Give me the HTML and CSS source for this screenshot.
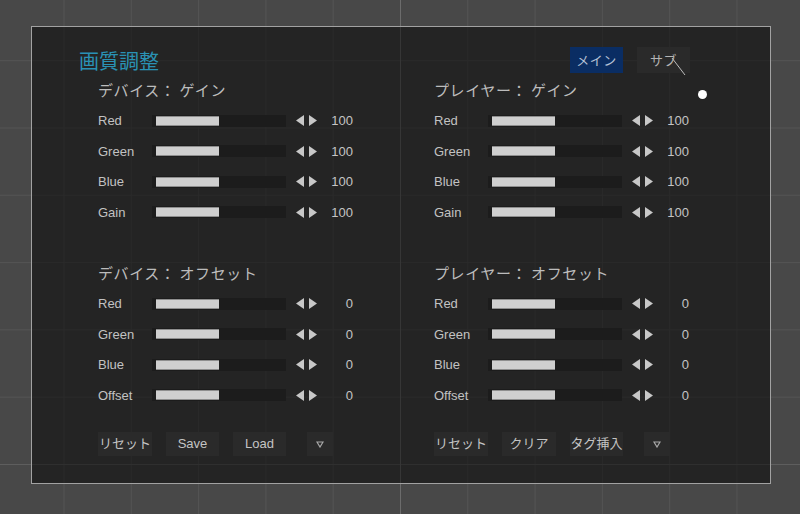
FILE: index.html
```html
<!DOCTYPE html>
<html lang="ja">
<head>
<meta charset="utf-8">
<title>画質調整</title>
<link rel="stylesheet" href="styles.css">
</head>
<body>
<div class="panel">
  <div class="topbar">
    <h1 class="title">画質調整</h1>
    <div class="tabs">
      <button class="tab tab-active">メイン</button>
      <button class="tab">サブ</button>
    </div>
  </div>
  <div class="columns">
    <section class="col">
      <div class="group">
        <h2 class="group-title">デバイス： ゲイン</h2>
        <div class="row"><span class="label">Red</span><span class="track"><span class="fill"></span></span><svg class="arrows" width="21" height="11" viewBox="0 0 21 11"><polygon points="8,0 0,5.5 8,11"/><polygon points="13,0 21,5.5 13,11"/></svg><span class="value">100</span></div>
        <div class="row"><span class="label">Green</span><span class="track"><span class="fill"></span></span><svg class="arrows" width="21" height="11" viewBox="0 0 21 11"><polygon points="8,0 0,5.5 8,11"/><polygon points="13,0 21,5.5 13,11"/></svg><span class="value">100</span></div>
        <div class="row"><span class="label">Blue</span><span class="track"><span class="fill"></span></span><svg class="arrows" width="21" height="11" viewBox="0 0 21 11"><polygon points="8,0 0,5.5 8,11"/><polygon points="13,0 21,5.5 13,11"/></svg><span class="value">100</span></div>
        <div class="row"><span class="label">Gain</span><span class="track"><span class="fill"></span></span><svg class="arrows" width="21" height="11" viewBox="0 0 21 11"><polygon points="8,0 0,5.5 8,11"/><polygon points="13,0 21,5.5 13,11"/></svg><span class="value">100</span></div>
      </div>
      <div class="group group-second">
        <h2 class="group-title">デバイス： オフセット</h2>
        <div class="row"><span class="label">Red</span><span class="track"><span class="fill"></span></span><svg class="arrows" width="21" height="11" viewBox="0 0 21 11"><polygon points="8,0 0,5.5 8,11"/><polygon points="13,0 21,5.5 13,11"/></svg><span class="value">0</span></div>
        <div class="row"><span class="label">Green</span><span class="track"><span class="fill"></span></span><svg class="arrows" width="21" height="11" viewBox="0 0 21 11"><polygon points="8,0 0,5.5 8,11"/><polygon points="13,0 21,5.5 13,11"/></svg><span class="value">0</span></div>
        <div class="row"><span class="label">Blue</span><span class="track"><span class="fill"></span></span><svg class="arrows" width="21" height="11" viewBox="0 0 21 11"><polygon points="8,0 0,5.5 8,11"/><polygon points="13,0 21,5.5 13,11"/></svg><span class="value">0</span></div>
        <div class="row"><span class="label">Offset</span><span class="track"><span class="fill"></span></span><svg class="arrows" width="21" height="11" viewBox="0 0 21 11"><polygon points="8,0 0,5.5 8,11"/><polygon points="13,0 21,5.5 13,11"/></svg><span class="value">0</span></div>
      </div>
      <div class="actions">
        <button class="btn btn-wide">リセット</button>
        <button class="btn">Save</button>
        <button class="btn">Load</button>
        <button class="btn btn-drop"><svg width="8" height="7" viewBox="0 0 8 7"><polygon points="1,1 7,1 4,6"/></svg></button>
      </div>
    </section>
    <section class="col">
      <div class="group">
        <h2 class="group-title">プレイヤー： ゲイン</h2>
        <div class="row"><span class="label">Red</span><span class="track"><span class="fill"></span></span><svg class="arrows" width="21" height="11" viewBox="0 0 21 11"><polygon points="8,0 0,5.5 8,11"/><polygon points="13,0 21,5.5 13,11"/></svg><span class="value">100</span></div>
        <div class="row"><span class="label">Green</span><span class="track"><span class="fill"></span></span><svg class="arrows" width="21" height="11" viewBox="0 0 21 11"><polygon points="8,0 0,5.5 8,11"/><polygon points="13,0 21,5.5 13,11"/></svg><span class="value">100</span></div>
        <div class="row"><span class="label">Blue</span><span class="track"><span class="fill"></span></span><svg class="arrows" width="21" height="11" viewBox="0 0 21 11"><polygon points="8,0 0,5.5 8,11"/><polygon points="13,0 21,5.5 13,11"/></svg><span class="value">100</span></div>
        <div class="row"><span class="label">Gain</span><span class="track"><span class="fill"></span></span><svg class="arrows" width="21" height="11" viewBox="0 0 21 11"><polygon points="8,0 0,5.5 8,11"/><polygon points="13,0 21,5.5 13,11"/></svg><span class="value">100</span></div>
      </div>
      <div class="group group-second">
        <h2 class="group-title">プレイヤー： オフセット</h2>
        <div class="row"><span class="label">Red</span><span class="track"><span class="fill"></span></span><svg class="arrows" width="21" height="11" viewBox="0 0 21 11"><polygon points="8,0 0,5.5 8,11"/><polygon points="13,0 21,5.5 13,11"/></svg><span class="value">0</span></div>
        <div class="row"><span class="label">Green</span><span class="track"><span class="fill"></span></span><svg class="arrows" width="21" height="11" viewBox="0 0 21 11"><polygon points="8,0 0,5.5 8,11"/><polygon points="13,0 21,5.5 13,11"/></svg><span class="value">0</span></div>
        <div class="row"><span class="label">Blue</span><span class="track"><span class="fill"></span></span><svg class="arrows" width="21" height="11" viewBox="0 0 21 11"><polygon points="8,0 0,5.5 8,11"/><polygon points="13,0 21,5.5 13,11"/></svg><span class="value">0</span></div>
        <div class="row"><span class="label">Offset</span><span class="track"><span class="fill"></span></span><svg class="arrows" width="21" height="11" viewBox="0 0 21 11"><polygon points="8,0 0,5.5 8,11"/><polygon points="13,0 21,5.5 13,11"/></svg><span class="value">0</span></div>
      </div>
      <div class="actions">
        <button class="btn btn-wide">リセット</button>
        <button class="btn btn-wide">クリア</button>
        <button class="btn">タグ挿入</button>
        <button class="btn btn-drop"><svg width="8" height="7" viewBox="0 0 8 7"><polygon points="1,1 7,1 4,6"/></svg></button>
      </div>
    </section>
  </div>
  <svg class="cursor-line" width="16" height="20" viewBox="0 0 16 20"><line x1="1" y1="1" x2="14" y2="18"/></svg>
  <span class="cursor-dot"></span>
</div>
</body>
</html>
```

FILE: styles.css
```css
html {
  height: 100%;
  background-color: #484848;
  background-image:
    linear-gradient(to right, transparent 400px, #6c6c6c 400px, #6c6c6c 401px, transparent 401px),
    linear-gradient(to bottom, transparent 464px, #5e5e5e 464px, #5e5e5e 465px, transparent 465px),
    linear-gradient(to right, #545454 1px, transparent 1px),
    linear-gradient(to bottom, #545454 1px, transparent 1px);
  background-size: 800px 514px, 800px 514px, 67.3px 67.3px, 67.3px 67.3px;
  background-position: 0 0, 0 0, 63.5px 0, 0 60.2px;
  background-repeat: no-repeat, no-repeat, repeat, repeat;
}

body {
  margin: 0;
  font-family: "Liberation Sans", "Noto Sans CJK JP", sans-serif;
  color: #c4c4c4;
}

.panel {
  position: relative;
  box-sizing: border-box;
  margin: 26px 0 0 31px;
  width: 740px;
  height: 458px;
  border: 1px solid #a2a2a2;
  background: rgba(0, 0, 0, 0.5);
  padding-top: 20px;
}

.topbar {
  display: flex;
  justify-content: space-between;
  align-items: center;
  height: 26px;
  padding: 0 80px 0 47px;
}

.title {
  margin: 0;
  padding-top: 2px;
  font-family: "Noto Sans CJK JP", sans-serif;
  font-weight: normal;
  font-size: 20px;
  line-height: 24px;
  color: #2a92b4;
}

.tabs {
  display: flex;
  gap: 14px;
}

.tab {
  width: 53px;
  height: 26px;
  padding: 0;
  border: none;
  background: #2a2a2a;
  color: #b4b4b4;
  font-family: "Noto Sans CJK JP", sans-serif;
  font-size: 13px;
  line-height: 26px;
  letter-spacing: 0.5px;
}

.tab-active {
  background: #0a2d63;
  color: #b6c2d6;
}

.columns {
  display: grid;
  grid-template-columns: 336px 336px;
  margin-top: 7px;
  padding-left: 66px;
}

.group-title {
  margin: 0 0 5.5px;
  height: 20px;
  font-family: "Noto Sans CJK JP", sans-serif;
  font-weight: normal;
  font-size: 15px;
  line-height: 20px;
  letter-spacing: 0.6px;
  color: #bcbcbc;
}

.group-second {
  margin-top: 35.5px;
}

.row {
  display: flex;
  align-items: center;
  height: 30.5px;
  font-size: 13px;
}

.label {
  width: 54px;
  color: #c2c2c2;
}

.track {
  display: flex;
  align-items: center;
  width: 134px;
  height: 12px;
  background: #1c1c1c;
}

.fill {
  box-sizing: border-box;
  margin-left: 4px;
  width: 63px;
  height: 10px;
  background: #cfcfcf;
  border-top: 1.5px solid #8e8e8e;
  border-bottom: 1px solid #8e8e8e;
}

.arrows {
  margin-left: 10px;
  fill: #c8c8c8;
}

.value {
  width: 36px;
  text-align: right;
  color: #c4c4c4;
}

.actions {
  display: flex;
  gap: 14px;
  margin-top: 21.5px;
  height: 24px;
}

.btn {
  width: 53px;
  height: 24px;
  padding: 0;
  border: none;
  background: #2a2a2a;
  color: #c4c4c4;
  font-family: "Liberation Sans", "Noto Sans CJK JP", sans-serif;
  font-size: 13px;
  line-height: 24px;
}

.btn-wide {
  width: 54px;
}

.btn-drop {
  width: 26px;
  margin-left: 7px;
  display: flex;
  align-items: center;
  justify-content: center;
}

.btn-drop polygon {
  fill: none;
  stroke: #a8a8a8;
  stroke-width: 1.2;
}

.cursor-line {
  position: absolute;
  left: 639px;
  top: 30px;
}

.cursor-line line {
  stroke: #bdbdbd;
  stroke-width: 1;
}

.cursor-dot {
  position: absolute;
  left: 666px;
  top: 63px;
  width: 9px;
  height: 9px;
  border-radius: 50%;
  background: #ffffff;
}
```
